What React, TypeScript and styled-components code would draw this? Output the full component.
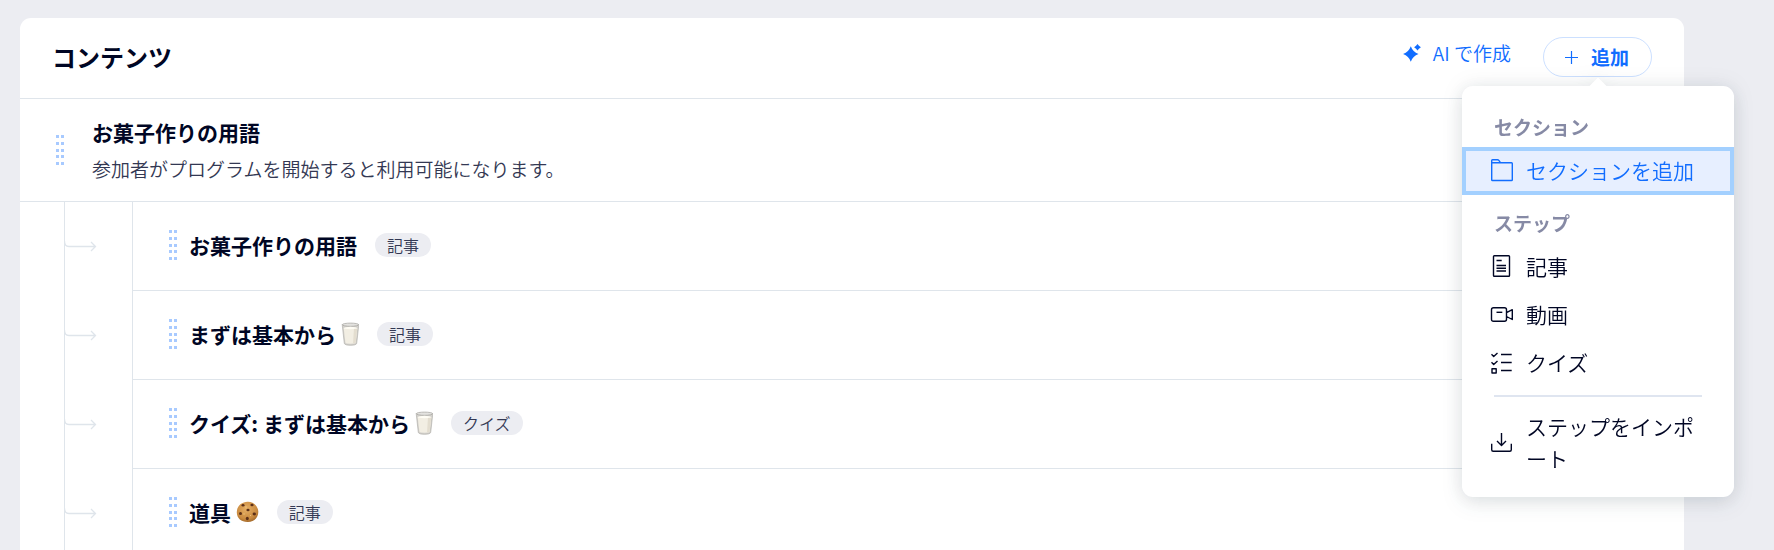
import React from "react";
import styled, { createGlobalStyle } from "styled-components";

const ink = "#000624";
const blue = "#116dff";
const line = "#dfe5eb";

const GlobalStyle = createGlobalStyle`
  *, *::before, *::after { box-sizing: border-box; }
  body {
    margin: 0;
    background: #ecedf2;
    color: ${ink};
    font-family: "Noto Sans CJK JP", sans-serif;
    font-size: 19px;
    line-height: 24px;
  }
  h1, h2, h3, p, ul { margin: 0; padding: 0; }
  button { font: inherit; color: inherit; background: none; border: 0; padding: 0; cursor: pointer; }
`;

const Page = styled.main`
  min-height: 100vh;
  padding: 18px 90px 0 20px;
`;

const Card = styled.section`
  background: #fff;
  border-radius: 11px 11px 0 0;
`;

const CardHeader = styled.header`
  display: flex;
  align-items: center;
  justify-content: space-between;
  height: 81px;
  padding: 0 32px 2px;
  border-bottom: 1px solid ${line};
`;

const CardTitle = styled.h1`
  font-size: 24px;
  line-height: 32px;
  font-weight: 700;
`;

const Actions = styled.div`
  display: flex;
  align-items: center;
  gap: 32px;
`;

const AiButton = styled.button`
  display: flex;
  align-items: center;
  gap: 12px;
  padding-bottom: 8px;
  color: ${blue};
  font-weight: 350;
`;

const AddMenu = styled.div`
  position: relative;
`;

const AddButton = styled.button`
  display: flex;
  align-items: center;
  gap: 12px;
  height: 40px;
  padding: 0 22px 0 21px;
  border: 1px solid #cce0ff;
  border-radius: 20px;
  color: ${blue};
  font-weight: 700;
`;

const Popover = styled.div`
  position: absolute;
  z-index: 1;
  top: 49px;
  right: -82px;
  width: 272px;
  padding: 13px 0 14px;
  border-radius: 11px;
  background: #fff;
  filter: drop-shadow(0 6px 10px rgba(22, 45, 61, 0.1)) drop-shadow(0 0 10px rgba(22, 45, 61, 0.08));

  &::before {
    content: "";
    position: absolute;
    top: -6px;
    left: 50%;
    width: 12px;
    height: 12px;
    background: #fff;
    transform: translateX(-50%) rotate(45deg);
  }
`;

const GroupLabel = styled.h2`
  padding: 8px 32px 0;
  font-size: 19px;
  line-height: 40px;
  font-weight: 700;
  color: #868aa5;
`;

const MenuItem = styled.button<{ $active?: boolean }>`
  display: flex;
  align-items: center;
  gap: 12px;
  width: 100%;
  padding: 3px 24px 5px;
  border: 4px solid ${(p) => (p.$active ? "#a3d0ff" : "transparent")};
  background: ${(p) => (p.$active ? "#e7efff" : "transparent")};
  color: ${(p) => (p.$active ? blue : ink)};
  font-size: 21px;
  line-height: 32px;
  font-weight: 350;
  text-align: left;
  line-break: anywhere;

  svg { flex: none; }
`;

const Divider = styled.hr`
  margin: 8px 32px 6px;
  border: 0;
  border-top: 2px solid #dfe5f0;
`;

const SectionRow = styled.div`
  display: flex;
  align-items: center;
  gap: 28px;
  height: 103px;
  padding: 0 36px;
  border-bottom: 1px solid ${line};
`;

const SectionText = styled.div`
  display: grid;
  gap: 9px;
`;

const ItemTitle = styled.h3`
  display: flex;
  align-items: center;
  font-size: 21px;
  line-height: 28px;
  font-weight: 700;
  white-space: pre;
`;

const Note = styled.p`
  font-size: 19px;
  line-height: 28px;
  font-weight: 350;
  color: #333853;
`;

const Steps = styled.ul`
  list-style: none;
`;

const Step = styled.li`
  display: flex;
`;

const Branch = styled.div`
  display: flex;
  align-items: center;
  flex: none;
  width: 68px;
  margin-left: 44px;
  padding-bottom: 2px;
  border-left: 1px solid ${line};
`;

const StepBody = styled.div`
  display: flex;
  align-items: center;
  flex: 1;
  gap: 12px;
  height: 89px;
  padding: 0 36px 2px;
  border-left: 1px solid ${line};
  border-bottom: 1px solid ${line};
`;

const Badge = styled.span`
  margin-left: 6px;
  padding: 0 12px;
  border-radius: 12px;
  background: #ecedf2;
  color: #333853;
  font-size: 16px;
  line-height: 24px;
  font-weight: 350;
`;

const HandleButton = styled.button`
  display: flex;
  cursor: grab;
`;

function Handle() {
  return (
    <HandleButton aria-label="並べ替え">
      <svg width="8" height="30" fill="#a8caff" shapeRendering="crispEdges" aria-hidden="true">
        {[0, 7, 14, 20, 27].map((y) => (
          <React.Fragment key={y}>
            <rect x="0" y={y} width="3" height="3" />
            <rect x="5" y={y} width="3" height="3" />
          </React.Fragment>
        ))}
      </svg>
    </HandleButton>
  );
}

function BranchArrow() {
  return (
    <svg width="32" height="20" fill="none" stroke={line} strokeWidth="1.3" aria-hidden="true">
      <path d="M-.5 5C-.5 8.5 1 10.5 4 10.5H30M26 6l4.500 4.500L26 15" />
    </svg>
  );
}

function Sparkle() {
  return (
    <svg width="18" height="18" fill="currentColor" aria-hidden="true">
      <path d="M7.800 2.300Q9.800 8 15.500 10Q9.800 12 7.800 17.700Q5.800 12 .1 10Q5.800 8 7.800 2.300Z" />
      <path d="M14.500 0Q15.700 2.100 17.900 3.300Q15.700 4.500 14.500 6.600Q13.300 4.500 11.100 3.300Q13.300 2.100 14.500 0Z" />
    </svg>
  );
}

function Plus() {
  return (
    <svg width="14" height="14" stroke="currentColor" strokeWidth="1.200" aria-hidden="true">
      <path d="M0 7.500H13M6.500 1V14" />
    </svg>
  );
}

function Glyph({ d, sharp }: { d: string; sharp?: string }) {
  return (
    <svg width="24" height="24" fill="none" stroke="currentColor" strokeWidth="1.400" aria-hidden="true">
      <path d={d} strokeLinejoin="round" />
      {sharp && <path d={sharp} />}
    </svg>
  );
}

const glyphs = {
  folder: <Glyph d="M1.700 5V2.500Q1.700 1.700 2.500 1.700H7.500Q8.300 1.700 8.800 2.400L10.500 4.700H21.500Q22.300 4.700 22.300 5.500V21.700Q22.300 22.500 21.500 22.500H2.500Q1.700 22.500 1.700 21.700V4.700H10.500" />,
  article: (
    <Glyph
      d="M4.300 1.700H18.700Q19.500 1.700 19.500 2.500V21.500Q19.500 22.300 18.700 22.300H4.300Q3.500 22.300 3.500 21.500V2.500Q3.500 1.700 4.300 1.700Z"
      sharp="M6.500 6.500H11.700M6.500 11.500H16M6.500 14.300H16M6.500 17H16"
    />
  ),
  video: (
    <Glyph
      d="M3.500 5.700H14.500Q16.500 5.700 16.500 7.700V17.300Q16.500 19.300 14.500 19.300H3.500Q1.500 19.300 1.500 17.300V7.700Q1.500 5.700 3.500 5.700ZM16.500 10.700L22.300 7.700V17.500L16.500 14.500"
      sharp="M6.500 10.300H12.300"
    />
  ),
  quiz: (
    <Glyph
      d="M1.500 4.300L3.700 6.500L7.500 2.900M1.500 12.300L3.700 14.500L7.500 10.900M2 18.800H6.200V23H2Z"
      sharp="M11 4.500H21.700M11 12.500H21.700M11 20.500H21.700"
    />
  ),
  download: <Glyph d="M11.500 3V15.300M7 11L11.500 15.500L16 11M1.700 13.800V19.800Q1.700 21.300 3.200 21.300H19.800Q21.300 21.300 21.300 19.800V13.800" />,
};

function Milk() {
  return (
    <svg width="23" height="24" role="img" aria-label="ミルク">
      <path d="M6.200 2.500L8.300 21.500Q8.600 23.300 14.500 23.300T20.700 21.500L22.800 2.500Z" fill="#d3d1cc" stroke="#aaa8a3" strokeWidth=".6" />
      <path d="M7.700 6L9.400 20.500Q9.700 21.700 14.500 21.700T19.600 20.500L21.300 6Z" fill="#f2eee3" />
      <path d="M18 6L17 21.500Q19.400 21.200 19.600 20.500L21.300 6Z" fill="#e3ddcf" />
      <ellipse cx="14.500" cy="2.700" rx="8.200" ry="1.600" fill="#e3e2df" stroke="#a5a49f" strokeWidth=".7" />
      <ellipse cx="14.500" cy="6" rx="6.800" ry="1.200" fill="#fffdf5" />
    </svg>
  );
}

function Cookie() {
  return (
    <svg width="23" height="22" role="img" aria-label="クッキー">
      <defs>
        <radialGradient id="dough" cx=".45" cy=".35" r=".7">
          <stop offset="0" stopColor="#e6b066" />
          <stop offset=".7" stopColor="#c98a3f" />
          <stop offset="1" stopColor="#9c6326" />
        </radialGradient>
      </defs>
      <path d="M11.500 .8C17 .5 22 4.500 22.300 10.500C22.500 16.500 18 21 12 21C5.500 21.200 1 17.500 .8 11.500C.6 5.300 5.500 1 11.500 .8Z" fill="url(#dough)" />
      <g fill="#5b2f18">
        <ellipse cx="7" cy="4.200" rx="1.500" ry="1.200" />
        <ellipse cx="16" cy="4" rx="1.600" ry="1.200" />
        <ellipse cx="12" cy="9" rx="1.600" ry="1.300" />
        <ellipse cx="4.500" cy="12.500" rx="1.500" ry="1.600" />
        <ellipse cx="18.300" cy="13" rx="1.700" ry="1.400" />
        <ellipse cx="11.300" cy="17.500" rx="1.500" ry="1.700" />
      </g>
      <g fill="#f0c988">
        <circle cx="10" cy="6" r=".7" />
        <circle cx="8" cy="13" r=".7" />
        <circle cx="14.500" cy="14.500" r=".6" />
      </g>
    </svg>
  );
}

const steps = [
  { title: "お菓子作りの用語", kind: "記事" },
  { title: "まずは基本から", emoji: <Milk />, kind: "記事" },
  { title: "クイズ: まずは基本から", emoji: <Milk />, kind: "クイズ" },
  { title: "道具 ", emoji: <Cookie />, kind: "記事" },
];

export default function App() {
  return (
    <>
      <GlobalStyle />
      <Page lang="ja">
        <Card>
          <CardHeader>
            <CardTitle>コンテンツ</CardTitle>
            <Actions>
              <AiButton>
                <Sparkle />
                AI で作成
              </AiButton>
              <AddMenu>
                <AddButton aria-haspopup="menu" aria-expanded="true">
                  <Plus />
                  追加
                </AddButton>
                <Popover>
                  <GroupLabel>セクション</GroupLabel>
                  <MenuItem $active>{glyphs.folder}セクションを追加</MenuItem>
                  <GroupLabel>ステップ</GroupLabel>
                  <MenuItem>{glyphs.article}記事</MenuItem>
                  <MenuItem>{glyphs.video}動画</MenuItem>
                  <MenuItem>{glyphs.quiz}クイズ</MenuItem>
                  <Divider />
                  <MenuItem>{glyphs.download}ステップをインポート</MenuItem>
                </Popover>
              </AddMenu>
            </Actions>
          </CardHeader>
          <SectionRow>
            <Handle />
            <SectionText>
              <ItemTitle as="h2">お菓子作りの用語</ItemTitle>
              <Note>参加者がプログラムを開始すると利用可能になります。</Note>
            </SectionText>
          </SectionRow>
          <Steps>
            {steps.map((step) => (
              <Step key={step.title}>
                <Branch>
                  <BranchArrow />
                </Branch>
                <StepBody>
                  <Handle />
                  <ItemTitle>
                    {step.title}
                    {step.emoji}
                  </ItemTitle>
                  <Badge>{step.kind}</Badge>
                </StepBody>
              </Step>
            ))}
          </Steps>
        </Card>
      </Page>
    </>
  );
}
